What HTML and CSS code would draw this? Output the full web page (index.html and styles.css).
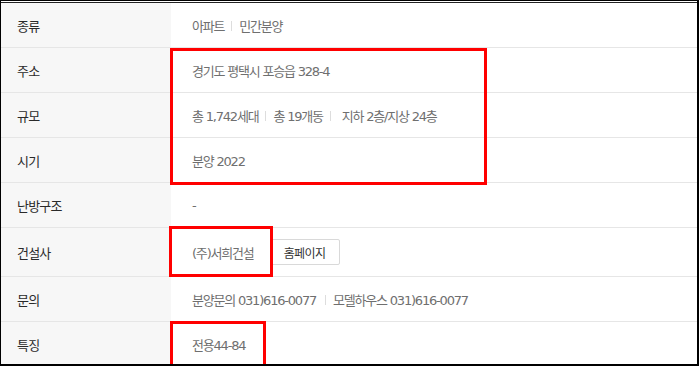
FILE: index.html
```html
<!DOCTYPE html>
<html lang="ko">
<head>
<meta charset="utf-8">
<link rel="stylesheet" href="styles.css">
</head>
<body>
<div class="frame">
  <div class="table">
    <div class="row"><div class="th">종류</div><div class="td"><span>아파트</span><i class="sep"></i><span>민간분양</span></div></div>
    <div class="row"><div class="th">주소</div><div class="td"><span>경기도 평택시 포승읍 328-4</span></div></div>
    <div class="row"><div class="th">규모</div><div class="td"><span>총 1,742세대</span><i class="sep"></i><span>총 19개동</span><i class="sep"></i><span class="pl">지하 2층/지상 24층</span></div></div>
    <div class="row"><div class="th">시기</div><div class="td"><span>분양 2022</span></div></div>
    <div class="row"><div class="th">난방구조</div><div class="td"><span>-</span></div></div>
    <div class="row tall"><div class="th">건설사</div><div class="td"><span>(주)서희건설</span><button class="btn">홈페이지</button></div></div>
    <div class="row"><div class="th">문의</div><div class="td"><span>분양문의 031)616-0077</span><i class="sep wide"></i><span>모델하우스 031)616-0077</span></div></div>
    <div class="row last"><div class="th">특징</div><div class="td"><span>전용44-84</span></div></div>
  </div>
  <div class="mark m1"></div>
  <div class="mark m2"></div>
  <div class="mark m3"></div>
</div>
</body>
</html>
```
FILE: styles.css
```css
* { box-sizing: border-box; }
html, body { margin: 0; padding: 0; background: #fff; }
.frame {
  position: relative;
  width: 699px;
  height: 366px;
  border-left: 1px solid #000;
  border-top: 1px solid #000;
  border-right: 2px solid #000;
  border-bottom: 2px solid #000;
  padding-top: 1px;
  overflow: hidden;
  font-family: "Noto Sans CJK KR", "Noto Sans", sans-serif;
}
.table { border-top: 1px solid #222; }
.row {
  display: flex;
  height: 45px;
  border-bottom: 1px solid #e6e6e6;
}
.row.tall { height: 49px; }
.row.last { border-bottom: 0; }
.th {
  width: 170px;
  flex: none;
  background: #f7f7f7;
  display: flex;
  align-items: center;
  padding-left: 16px;
  font-size: 13px;
  letter-spacing: -0.8px;
  color: #2a2a2a;
}
.td {
  flex: 1;
  display: flex;
  align-items: center;
  padding-left: 21px;
  font-family: "DejaVu Sans", "Noto Sans CJK KR", sans-serif;
  font-size: 13px;
  letter-spacing: -1.2px;
  color: #6f6f6f;
}
.sep {
  display: inline-block;
  width: 1px;
  height: 10px;
  background: #ddd;
  margin: 1px 7px 0 7px;
}
.sep.wide { margin: 1px 7px 0 9px; }
.pl { margin-left: 4px; }
.btn {
  flex: none;
  margin-left: 16px;
  height: 26px;
  width: 70px;
  padding: 0;
  border: 1px solid #d9d9d9;
  border-radius: 2px;
  background: #fff;
  font-family: "Noto Sans CJK KR", sans-serif;
  font-size: 12px;
  letter-spacing: -0.6px;
  color: #333;
}
.mark {
  position: absolute;
  border: 3px solid #ff0000;
}
.m1 { left: 169px; top: 47px; width: 317px; height: 137px; }
.m2 { left: 168px; top: 225px; width: 104px; height: 51px; }
.m3 { left: 169px; top: 320px; width: 96px; height: 50px; }
```
